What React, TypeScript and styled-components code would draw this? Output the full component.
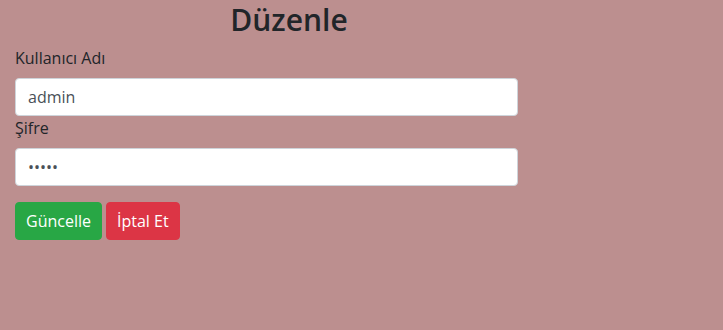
import React from "react";
import styled, { createGlobalStyle } from "styled-components";

const Global = createGlobalStyle`
  html, body {
    margin: 0;
    padding: 0;
    background: #bc8f8f;
    font-family: "Open Sans", "Noto Sans", sans-serif;
    color: #212529;
    font-size: 16px;
  }
`;

const Page = styled.div`
  width: 723px;
  height: 330px;
  background: #bc8f8f;
  display: flex;
  flex-direction: column;
`;

const Title = styled.h2`
  margin: 0 0 8px 0;
  padding-top: 1px;
  height: 37px;
  width: 578px;
  text-align: center;
  font-size: 30px;
  font-weight: 600;
  line-height: 38px;
  color: #212529;
`;

const Form = styled.form`
  display: flex;
  flex-direction: column;
  width: 503px;
  padding-left: 15px;
`;

const Group = styled.div`
  display: flex;
  flex-direction: column;
`;

const Label = styled.label`
  font-size: 16px;
  line-height: 24px;
  margin-bottom: 8px;
`;

const Input = styled.input`
  box-sizing: border-box;
  height: 38px;
  width: 100%;
  padding: 6px 12px;
  font-family: "Open Sans", "Noto Sans", sans-serif;
  font-size: 16px;
  color: #495057;
  background: #fff;
  border: 1px solid #ced4da;
  border-radius: 4px;
  outline: none;
`;

const Actions = styled.div`
  display: flex;
  gap: 4px;
  margin-top: 16px;
`;

const Button = styled.button<{ $variant: "success" | "danger" }>`
  box-sizing: border-box;
  height: 38px;
  padding: 6px 10px;
  font-family: "Open Sans", "Noto Sans", sans-serif;
  font-size: 16px;
  line-height: 24px;
  color: #fff;
  border: 1px solid ${(p) => (p.$variant === "success" ? "#28a745" : "#dc3545")};
  background: ${(p) => (p.$variant === "success" ? "#28a745" : "#dc3545")};
  border-radius: 4px;
  cursor: pointer;
`;

export default function App() {
  return (
    <Page>
      <Global />
      <Title>Düzenle</Title>
      <Form onSubmit={(e) => e.preventDefault()}>
        <Group>
          <Label>Kullanıcı Adı</Label>
          <Input defaultValue="admin" />
        </Group>
        <Group>
          <Label>Şifre</Label>
          <Input type="password" defaultValue="admin" />
        </Group>
        <Actions>
          <Button $variant="success">Güncelle</Button>
          <Button $variant="danger">İptal Et</Button>
        </Actions>
      </Form>
    </Page>
  );
}
